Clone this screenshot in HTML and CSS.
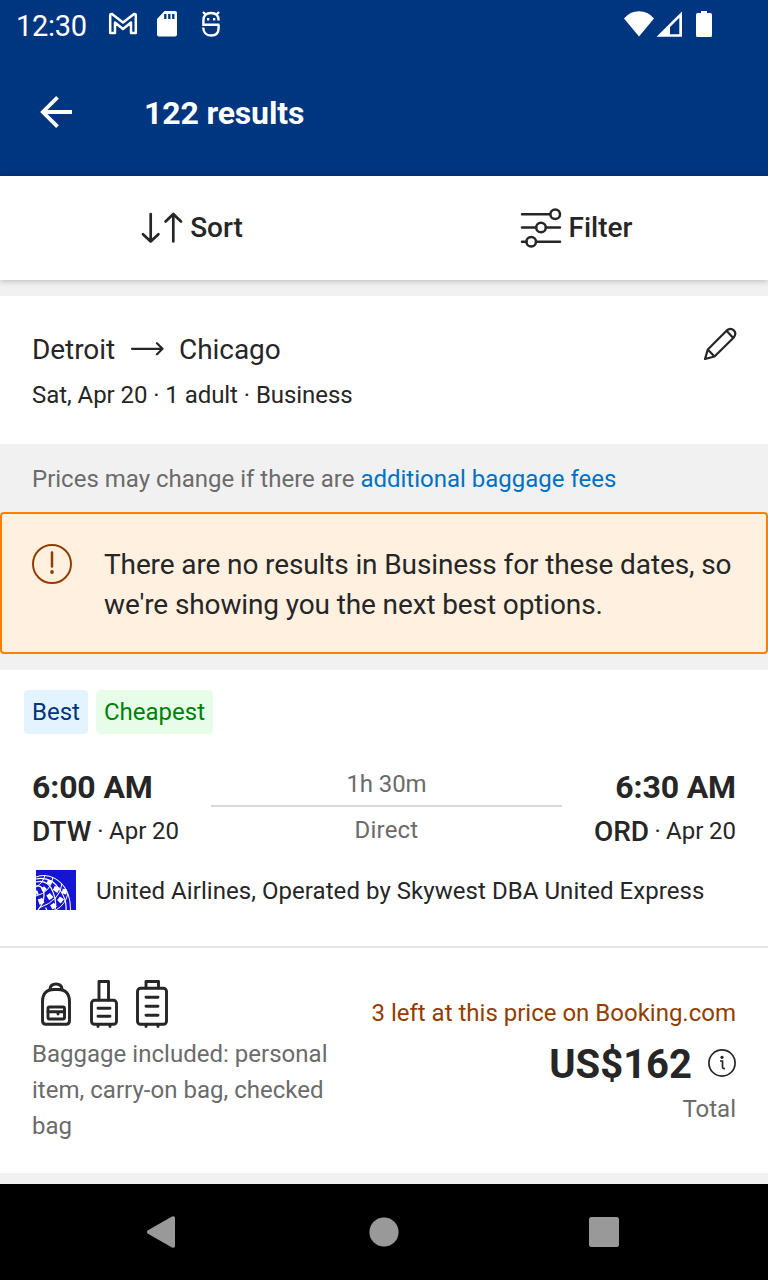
FILE: index.html
```html
<!DOCTYPE html>
<html lang="en">
<head>
<meta charset="utf-8">
<title>122 results</title>
<link rel="stylesheet" href="styles.css">
</head>
<body>
<div class="screen">
  <div class="status-bar">
    <span class="clock">12:30</span>
    <svg class="mail-icon" width="30" height="26" viewBox="108 11 30 26" fill="none" stroke="#fff" stroke-width="2.500" stroke-linejoin="round"><path d="M110.200 33V15.500Q110 13.500 112 14L123 22.500L134 14Q136 13.500 135.800 15.500V33H131V22.500L123 29L115 22.500V33Z"/></svg>
    <svg class="sd-icon" width="20" height="26" viewBox="157 11 20 26"><path fill="#fff" d="M164.500 11H175Q177 11 177 13V34.500Q177 36.500 175 36.500H159Q157 36.500 157 34.500V19Z"/><path d="M165.300 14V19M169.300 14V19M173.300 14V19" stroke="#003580" stroke-width="2.300"/></svg>
    <svg class="bot-icon" width="20" height="26" viewBox="201 11 20 26" fill="none" stroke="#fff" stroke-width="2.400"><path d="M219.500 24.800H203.400V20.500Q203.400 13 211 13Q218.600 13 218.600 20.500M203.200 27.500Q203.700 35.500 211 35.500Q218.600 35.500 218.600 28V25M203 12L206 15M219 12L216 15"/><path d="M207 19.200H209.300M213 19.200H215.300"/></svg>
    <span class="spacer"></span>
    <svg class="wifi-icon" width="32" height="26" viewBox="623 11 32 26" fill="#fff"><path d="M639 36.500L624 18.500Q630 11.300 639 11.300T654 18.500Z"/></svg>
    <svg class="signal-icon" width="26" height="26" viewBox="656 11 26 26" fill="#fff"><path fill-rule="evenodd" d="M656.500 36.800L682 11.500V36.800ZM670 34.200H679.300V17.800L670 27Z"/></svg>
    <svg class="battery-icon" width="16" height="26" viewBox="696 11 16 26" fill="#fff"><path d="M701 11H707V13H710.500Q712 13 712 14.500V35.500Q712 37 710.500 37H697.500Q696 37 696 35.500V14.500Q696 13 697.500 13H701Z"/></svg>
  </div>

  <header class="app-bar">
    <svg width="34" height="34" viewBox="39 95 34 34" fill="none" stroke="#fff" stroke-width="3.800"><path d="M72 112H42.500M57.500 97.300L42.800 112L57.500 126.700"/></svg>
    <h1 class="title">122 results</h1>
  </header>

  <div class="toolbar">
    <div class="tool">
      <svg width="42" height="32" viewBox="141 212 42 32" fill="none" stroke="#262626" stroke-width="2.700" stroke-linecap="round" stroke-linejoin="round"><path d="M150.700 214V241.500M143 234.200L150.700 241.500L158.400 234.200M173.300 241.500V214M165.600 221.500L173.300 214L181 221.500"/></svg>
      <span class="tool-label">Sort</span>
    </div>
    <div class="tool">
      <svg width="42" height="40" viewBox="520 208 42 40" fill="none" stroke="#262626" stroke-width="2.500" stroke-linecap="round"><path d="M522 214.200H550M522 227.500H536M546 227.500H560M522 241.700H526.500M536 241.700H560"/><circle cx="555.200" cy="214.200" r="4.800"/><circle cx="541" cy="227.500" r="4.800"/><circle cx="531.200" cy="241.700" r="4.800"/></svg>
      <span class="tool-label">Filter</span>
    </div>
  </div>

  <section class="route">
    <div>
      <div class="cities"><span>Detroit</span><svg width="34" height="16" viewBox="130 342 34 16" fill="none" stroke="#262626" stroke-width="2.200" stroke-linecap="round" stroke-linejoin="round"><path d="M132 348.800H162.500M157 343.200L162.500 348.800L157 354.300"/></svg><span>Chicago</span></div>
      <div class="trip">Sat, Apr 20 · 1 adult · Business</div>
    </div>
    <svg class="edit-icon" width="34" height="34" viewBox="703 327 34 34" fill="none" stroke="#262626" stroke-width="2.200" stroke-linejoin="round"><path d="M705 359L707.800 349.500L726.500 330.700Q730.500 327.200 733.800 330.400T733.300 338L714.500 356.500ZM707.800 349.500L714.500 356.500M726.500 330.700L733.300 338"/></svg>
  </section>

  <p class="fees">Prices may change if there are <a class="link">additional baggage fees</a></p>

  <div class="alert">
    <svg width="40" height="40" viewBox="0 0 40 40" fill="none" stroke="#923e01" stroke-width="2"><circle cx="20" cy="20" r="19"/><path d="M20 8.500V22.500" stroke-width="2.500" stroke-linecap="round"/><circle cx="20" cy="28" r="1.900" fill="#923e01" stroke="none"/></svg>
    <p class="alert-text">There are no results in Business for these dates, so<br>we're showing you the next best options.</p>
  </div>

  <article class="flight">
    <div class="badges"><span class="badge best">Best</span><span class="badge cheapest">Cheapest</span></div>
    <div class="times">
      <div class="endpoint departure">
        <div class="time">6:00 AM</div>
        <div class="place"><span class="code">DTW</span><span class="dot">·</span><span>Apr 20</span></div>
      </div>
      <div class="leg"><div class="duration">1h 30m</div><div class="stops">Direct</div></div>
      <div class="endpoint arrival">
        <div class="time">6:30 AM</div>
        <div class="place"><span class="code">ORD</span><span class="dot">·</span><span>Apr 20</span></div>
      </div>
    </div>
    <div class="airline">
      <svg width="40" height="40" viewBox="0 0 40 40"><defs><clipPath id="globe"><path d="M0 6.500Q10 3 19 8Q35 17 35 40H0Z"/></clipPath></defs><rect width="40" height="40" fill="#1414d2"/><g clip-path="url(#globe)" fill="none" stroke="#fff"><path stroke-width="2" d="M0 6.500Q10 3 19 8Q35 17 35 40"/><path stroke-width="1.200" d="M0 9Q15 6 24 20Q31 30 30 40M0 12Q12 9 17 22Q21 31 19 40M0 16Q8 15 8 25Q8 33 2 40"/><path stroke-width="1" d="M9 5Q7 13 0 17M17 7Q15 22 0 26M26 13Q25 30 3 38M32 23Q30 34 20 40"/><path stroke-width="4.200" stroke-dasharray="4.500 4.500" d="M14 10Q12 19 0 23"/><path stroke-width="5.500" stroke-dasharray="5 5" stroke-dashoffset="-3" d="M22 14Q20 27 0 33"/><path stroke-width="4.800" stroke-dasharray="5 4.500" d="M29 19Q28 32 10 40"/></g></svg>
      <span class="airline-name">United Airlines, Operated by Skywest DBA United Express</span>
    </div>
    <div class="fare">
      <div class="baggage">
        <svg width="136" height="50" viewBox="36 979 136 50" fill="none" stroke="#262626" stroke-width="2.900" stroke-linecap="round" stroke-linejoin="round"><path d="M42.500 1002Q42.500 989.500 54 989.500H58Q69.500 989.500 69.500 1002V1020.500Q69.500 1024.300 66 1024.300H46Q42.500 1024.300 42.500 1020.500ZM50 989Q50.500 984 56 984T62 989"/><rect x="48" y="1007" width="16.500" height="12" rx="1.500"/><path d="M48 1011.700H64.500M58 1012V1014"/><rect x="91.500" y="1000.300" width="25" height="24" rx="3"/><path d="M99 1000V981.500H108.500V1000M98 1008.200H110M98 1016.200H110M98 1024.500V1026.500M110 1024.500V1026.500"/><rect x="137.500" y="988.300" width="29" height="36" rx="3"/><path d="M146 988V981.500H158.500V988M146 997.200H158M146 1006.200H158M146 1015.200H158M146 1024.500V1026.500M158 1024.500V1026.500"/></svg>
        <p class="baggage-text">Baggage included: personal item, carry-on bag, checked bag</p>
      </div>
      <div class="price">
        <div class="left">3 left at this price on Booking.com</div>
        <div class="amount"><span class="sum">US$162</span><svg width="28" height="28" viewBox="0 0 28 28" fill="none" stroke="#262626" stroke-width="1.700"><circle cx="14" cy="14" r="13.100"/><path d="M12 12H14.500V18Q14.500 19.800 17 19.500"/><circle cx="14" cy="8.300" r="1.600" fill="#262626" stroke="none"/></svg></div>
        <div class="total">Total</div>
      </div>
    </div>
  </article>

  <nav class="nav-bar">
    <svg width="768" height="96" viewBox="0 0 768 96" fill="#999"><path d="M147.500 46.500L172 32.500Q175 31.500 175 34V62Q175 64.500 172 63.500L147.500 49.500Q146 48 147.500 46.500Z"/><circle cx="384" cy="48" r="14.600"/><rect x="589" y="33" width="30" height="30" rx="2.500"/></svg>
  </nav>
</div>
</body>
</html>
```

FILE: styles.css
```css
* { box-sizing: border-box; }
body { margin: 0; font-family: Roboto, "Liberation Sans", sans-serif; font-size: 24px; color: #262626; background: #f1f1f1; }
p, h1 { margin: 0; }
svg { display: block; flex: none; }
.screen { width: 768px; height: 1280px; display: flex; flex-direction: column; overflow: hidden; white-space: nowrap; }

.status-bar { height: 48px; flex: none; background: #003580; color: #fff; display: flex; align-items: center; padding: 0 56px 0 16px; }
.clock { width: 92px; font-size: 29px; letter-spacing: -.3px; line-height: 48px; padding-top: 3px; }
.sd-icon { margin-left: 19px; }
.bot-icon { margin-left: 24px; }
.spacer { flex: 1; }
.signal-icon { margin-left: 1px; }
.battery-icon { margin-left: 14px; }

.app-bar { height: 128px; flex: none; background: #003580; color: #fff; display: flex; align-items: center; gap: 71px; padding-left: 39px; }
.title { font-size: 32px; font-weight: 700; letter-spacing: -.15px; line-height: 40px; padding-top: 2px; }

.toolbar { height: 104px; flex: none; display: flex; background: #fff; box-shadow: 0 1px 6px rgba(0, 0, 0, .24); font-size: 28px; font-weight: 500; }
.tool { flex: 1; display: flex; align-items: center; justify-content: center; gap: 7px; }
.tool-label { padding-bottom: 2px; }

.route { height: 148px; flex: none; margin-top: 16px; background: #fff; display: flex; justify-content: space-between; padding: 31px 31px 0 32px; }
.cities { display: flex; align-items: center; gap: 15px; font-size: 28px; letter-spacing: -.07px; line-height: 45px; }
.trip { line-height: 46px; letter-spacing: -.06px; }

.fees { height: 68px; flex: none; padding-left: 32px; line-height: 70px; color: #6b6b6b; }
.link { color: #0071c2; }

.alert { height: 142px; flex: none; display: flex; gap: 32px; padding: 30px; border: 2px solid #ff8000; border-radius: 4px; background: #fff0e0; }
.alert-text { padding-top: 1px; font-size: 28px; letter-spacing: -.12px; line-height: 40px; }

.flight { height: 503px; flex: none; margin-top: 16px; padding-top: 20px; background: #fff; }
.badges { display: flex; gap: 8px; padding-left: 24px; }
.badge { line-height: 44px; padding: 0 8px; border-radius: 4px; }
.best { color: #003580; background: #e4f4ff; }
.cheapest { color: #008009; background: #e7fde9; }
.times { display: flex; gap: 32px; margin-top: 31px; padding: 0 32px; }
.time { font-size: 32px; font-weight: 700; letter-spacing: -.12px; line-height: 44px; }
.place { display: flex; line-height: 44px; letter-spacing: -.05px; }
.dot { width: 18.5px; text-align: center; }
.code { font-size: 28px; font-weight: 500; line-height: 46px; }
.departure { width: 147px; }
.arrival { width: 142px; text-align: right; }
.arrival .place { justify-content: flex-end; }
.leg { flex: 1; text-align: center; color: #6b6b6b; }
.duration { border-bottom: 2px solid #d9d9d9; line-height: 38px; padding-bottom: 2px; letter-spacing: -.1px; }
.stops { padding-top: 3px; line-height: 40px; letter-spacing: .2px; }
.airline { display: flex; align-items: center; gap: 20px; margin-top: 15px; padding-left: 36px; height: 40px; }
.airline-name { padding-top: 2px; letter-spacing: .055px; }
.fare { display: flex; justify-content: space-between; margin-top: 36px; border-top: 2px solid #e6e6e6; padding: 31px 32px 0; }
.baggage { width: 320px; color: #6b6b6b; }
.baggage svg { margin-left: 4px; }
.baggage-text { margin-top: 7px; line-height: 36px; letter-spacing: .02px; white-space: normal; }
.price { padding-top: 16px; text-align: right; }
.left { line-height: 36px; color: #923e01; }
.amount { display: flex; align-items: center; justify-content: flex-end; gap: 16px; height: 48px; margin-top: 8px; font-size: 40px; font-weight: 700; line-height: 48px; }
.sum { padding-top: 4px; }
.total { padding-top: 2px; line-height: 40px; color: #6b6b6b; }

.nav-bar { height: 96px; flex: none; margin-top: 11px; background: #000; }
```
